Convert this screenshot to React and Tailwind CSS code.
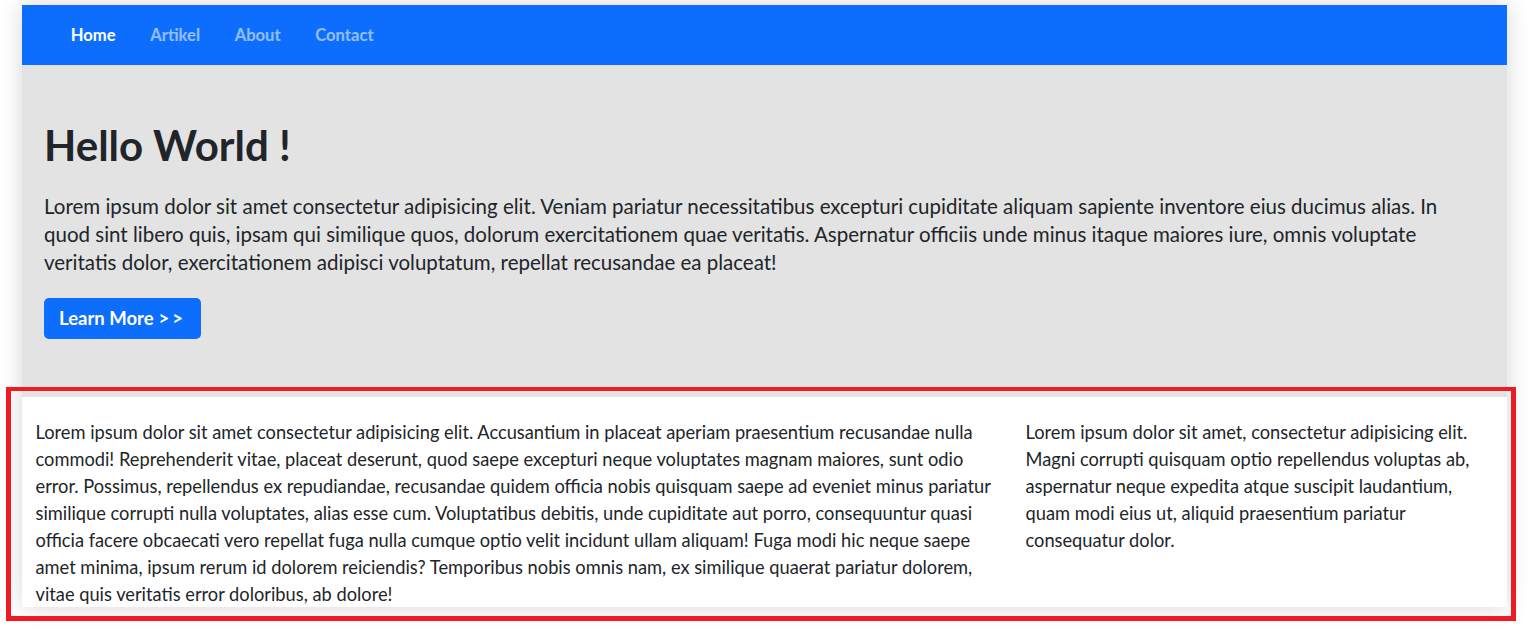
import React from 'react';

const links = [
  { label: 'Home', active: true },
  { label: 'Artikel' },
  { label: 'About' },
  { label: 'Contact' },
];

export default function App() {
  return (
    <div className="relative min-h-screen bg-white font-['Lato',sans-serif] text-[#212529]">
      <div className="ml-[22px] w-[1485px] pt-[5px]">
        <div className="shadow-[0_0_22px_rgba(0,0,0,0.16)]">
          {/* Navbar */}
          <nav className="flex h-[60px] items-center bg-[#0d6efd] pl-[31.5px] pt-[1px]">
            {links.map((l) => (
              <a
                key={l.label}
                href="#"
                className={`px-[17.3px] text-[16.6px] font-bold ${l.active ? 'text-white' : 'text-white/55'}`}
              >
                {l.label}
              </a>
            ))}
          </nav>

          {/* Jumbotron */}
          <section className="h-[332px] bg-[#e3e3e3] px-[22px] pt-[55px]">
            <h1 className="text-[42px] font-bold leading-[1.2]">Hello World !</h1>
            <p className="mt-[22px] text-[20.5px] leading-[28px]">
              Lorem ipsum dolor sit amet consectetur adipisicing elit. Veniam pariatur necessitatibus excepturi cupiditate aliquam sapiente inventore eius ducimus alias. In quod sint libero quis, ipsam qui similique quos, dolorum exercitationem quae veritatis. Aspernatur officiis unde minus itaque maiores iure, omnis voluptate veritatis dolor, exercitationem adipisci voluptatum, repellat recusandae ea placeat!
            </p>
            <button className="mt-[22px] flex h-[41px] items-center rounded-[5px] bg-[#0d6efd] px-[15px] text-[18.5px] font-bold text-white">
              Learn More <span className="ml-[5px] tracking-[3px]">&gt;&gt;</span>
            </button>
          </section>

          {/* Content */}
          <section className="grid h-[210px] grid-cols-[990px_495px] bg-white pt-[22px] text-[18.25px] leading-[27px]">
            <p className="px-[13.5px]">
              Lorem ipsum dolor sit amet consectetur adipisicing elit. Accusantium in placeat aperiam praesentium recusandae nulla commodi! Reprehenderit vitae, placeat deserunt, quod saepe excepturi neque voluptates magnam maiores, sunt odio error. Possimus, repellendus ex repudiandae, recusandae quidem officia nobis quisquam saepe ad eveniet minus pariatur similique corrupti nulla voluptates, alias esse cum. Voluptatibus debitis, unde cupiditate aut porro, consequuntur quasi officia facere obcaecati vero repellat fuga nulla cumque optio velit incidunt ullam aliquam! Fuga modi hic neque saepe amet minima, ipsum rerum id dolorem reiciendis? Temporibus nobis omnis nam, ex similique quaerat pariatur dolorem, vitae quis veritatis error doloribus, ab dolore!
            </p>
            <p className="px-[13.5px]">
              Lorem ipsum dolor sit amet, consectetur adipisicing elit. Magni corrupti quisquam optio repellendus voluptas ab, aspernatur neque expedita atque suscipit laudantium, quam modi eius ut, aliquid praesentium pariatur consequatur dolor.
            </p>
          </section>
        </div>
      </div>

      {/* Red highlight frame */}
      <div className="pointer-events-none absolute left-[6px] top-[387px] h-[234px] w-[1510px] border-[5px] border-t-[4px] border-[#ed1c24]" />
    </div>
  );
}
